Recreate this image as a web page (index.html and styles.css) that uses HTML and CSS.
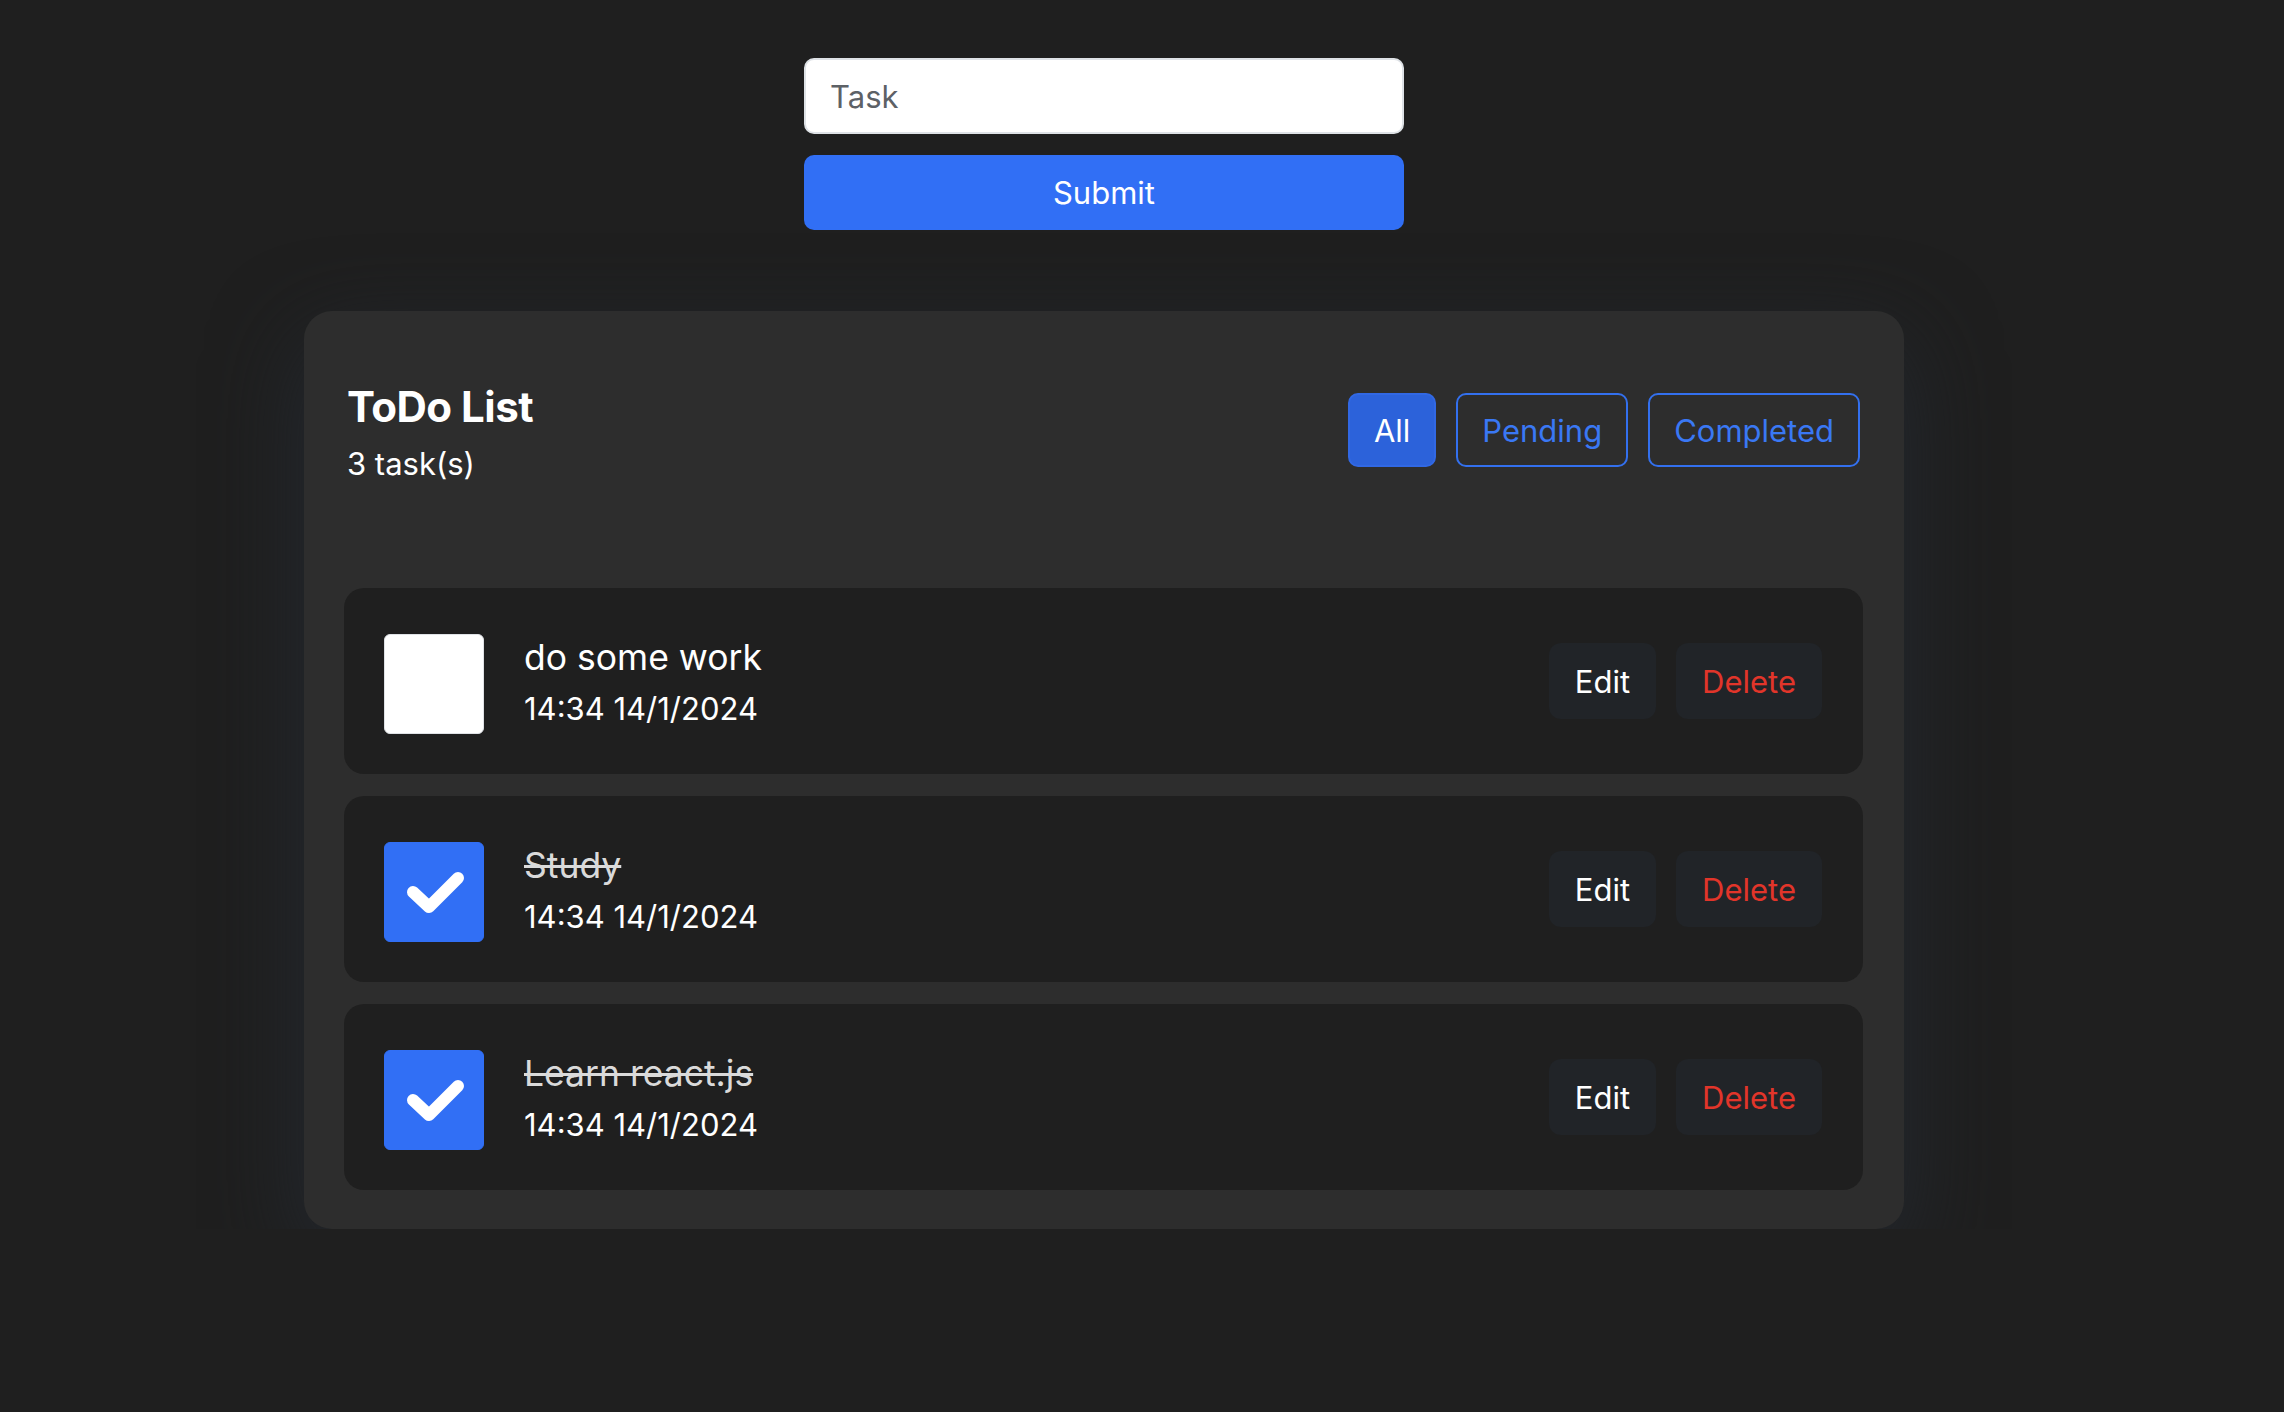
FILE: index.html
```html
<!DOCTYPE html>
<html lang="en">
<head>
<meta charset="utf-8">
<title>ToDo List</title>
<link rel="stylesheet" href="styles.css">
</head>
<body>
<main class="app">
  <form class="task-form">
    <input class="task-input" type="text" placeholder="Task">
    <button class="submit-btn" type="button">Submit</button>
  </form>

  <section class="card">
    <header class="card-header">
      <div class="title-block">
        <h1 class="title">ToDo List</h1>
        <p class="count">3 task(s)</p>
      </div>
      <div class="filters">
        <button class="filter active" type="button">All</button>
        <button class="filter" type="button">Pending</button>
        <button class="filter" type="button">Completed</button>
      </div>
    </header>

    <ul class="list">
      <li class="item">
        <span class="check"></span>
        <div class="item-text">
          <div class="item-title">do some work</div>
          <div class="item-date">14:34 14/1/2024</div>
        </div>
        <div class="actions">
          <button class="btn-edit" type="button">Edit</button>
          <button class="btn-delete" type="button">Delete</button>
        </div>
      </li>
      <li class="item">
        <span class="check checked"><svg viewBox="0 0 100 100" width="100" height="100"><path d="M29 50 L45 65 L74 36" fill="none" stroke="#fff" stroke-width="12" stroke-linecap="round" stroke-linejoin="round"/></svg></span>
        <div class="item-text">
          <div class="item-title done">Study</div>
          <div class="item-date">14:34 14/1/2024</div>
        </div>
        <div class="actions">
          <button class="btn-edit" type="button">Edit</button>
          <button class="btn-delete" type="button">Delete</button>
        </div>
      </li>
      <li class="item">
        <span class="check checked"><svg viewBox="0 0 100 100" width="100" height="100"><path d="M29 50 L45 65 L74 36" fill="none" stroke="#fff" stroke-width="12" stroke-linecap="round" stroke-linejoin="round"/></svg></span>
        <div class="item-text">
          <div class="item-title done">Learn react.js</div>
          <div class="item-date">14:34 14/1/2024</div>
        </div>
        <div class="actions">
          <button class="btn-edit" type="button">Edit</button>
          <button class="btn-delete" type="button">Delete</button>
        </div>
      </li>
    </ul>
  </section>
</main>
</body>
</html>
```

FILE: styles.css
```css
* { box-sizing: border-box; }

html, body {
  margin: 0;
  padding: 0;
  background: #1f1f1f;
  color: #ffffff;
  font-family: "Inter", "Noto Sans", "Liberation Sans", sans-serif;
}

.app {
  width: 1600px;
  margin-left: 304px;
  padding-top: 58px;
}

.task-form {
  width: 600px;
  margin: 0 auto;
  display: flex;
  flex-direction: column;
  gap: 21px;
}

.task-input {
  height: 76px;
  border: 2px solid #dee2e6;
  border-radius: 10px;
  background: #ffffff;
  padding: 0 24px;
  font-family: inherit;
  font-size: 31px;
  color: #333;
  outline: none;
}
.task-input::placeholder { color: #5d6166; }

.submit-btn {
  height: 75px;
  border: none;
  border-radius: 10px;
  background: #316ff5;
  color: #ffffff;
  font-family: inherit;
  font-size: 31px;
}

.card {
  margin-top: 81px;
  background: #2d2d2d;
  border-radius: 28px;
  padding: 82px 41px 39px 40px;
  box-shadow: 0 30px 90px 0 rgba(36, 41, 48, 0.95);
}

.card-header {
  display: flex;
  justify-content: space-between;
  align-items: flex-start;
  padding: 0 3px 0 3px;
  height: 88px;
  margin-bottom: 107px;
}

.title {
  margin: -13px 0 0 0;
  font-size: 42px;
  font-weight: 700;
  line-height: 54px;
  letter-spacing: -0.5px;
}

.count {
  margin: 10px 0 0 0;
  font-size: 31px;
  line-height: 40px;
}

.filters {
  display: flex;
  gap: 20px;
}

.filter {
  height: 74px;
  padding: 0 24px;
  border: 2px solid #3370ee;
  border-radius: 10px;
  background: transparent;
  color: #3a78f4;
  font-family: inherit;
  font-size: 31px;
}
.filter.active {
  background: #2c62da;
  border-color: #3168e4;
  color: #ffffff;
  padding: 0 24px;
}

.list {
  list-style: none;
  margin: 0;
  padding: 0;
  display: flex;
  flex-direction: column;
  gap: 22px;
}

.item {
  height: 186px;
  background: #1f1f1f;
  border-radius: 20px;
  padding: 0 41px 0 40px;
  display: flex;
  align-items: center;
}

.check {
  width: 100px;
  height: 100px;
  flex: none;
  margin-top: 6px;
  border-radius: 6px;
  background: #ffffff;
  border: 1px solid #dfe2e6;
  display: flex;
}
.check.checked {
  background: #316ff5;
  border-color: #316ff5;
}
.check svg { display: block; margin: -1px; }

.item-text {
  margin-left: 40px;
  flex: 1;
  display: flex;
  flex-direction: column;
}

.item-title {
  font-size: 35.5px;
  line-height: 48px;
  margin-top: 2px;
}
.item-title.done {
  text-decoration: line-through;
  color: #dadada;
}

.item-date {
  font-size: 31px;
  line-height: 42px;
  margin-top: 6px;
}

.actions {
  display: flex;
  gap: 20px;
}

.btn-edit, .btn-delete {
  height: 76px;
  border: none;
  border-radius: 12px;
  background: #212428;
  font-family: inherit;
  font-size: 31px;
  padding: 0 26px;
}
.btn-edit { color: #ffffff; }
.btn-delete { color: #e2352a; }
```
